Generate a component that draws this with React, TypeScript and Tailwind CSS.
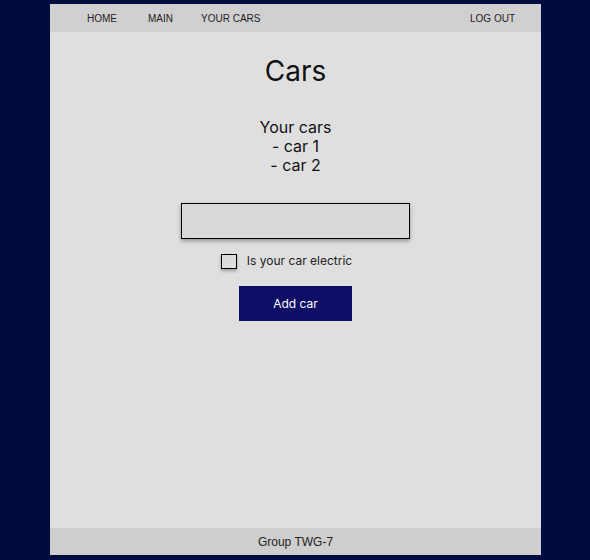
export default function App() {
    return (
        <div className="w-[590px] h-[560px] bg-[#000c40] pt-[4px] pl-[50px]">
            <div className="w-[491px] h-[551px] bg-[#dfdfdf] flex flex-col font-['Inter',sans-serif]">
                <nav className="h-[28px] bg-[#d0d0d0] flex items-center text-[10px] text-[#222] font-['Liberation_Sans',sans-serif]">
                    <a className="ml-[37px]">HOME</a>
                    <a className="ml-[31px]">MAIN</a>
                    <a className="ml-[28px]">YOUR CARS</a>
                    <a className="ml-auto mr-[26px]">LOG OUT</a>
                </nav>

                <main className="flex-1 flex flex-col items-center">
                    <h1 className="mt-[21px] text-[28px] leading-[36px] text-[#111]">Cars</h1>

                    <div className="mt-[29px] text-[16px] leading-[19px] text-[#111] text-center">
                        <p>Your cars</p>
                        <p>- car 1</p>
                        <p>- car 2</p>
                    </div>

                    <input
                        type="text"
                        className="mt-[28px] w-[229px] h-[36px] border border-black bg-[#d9d9d9] shadow-[0_2px_4px_rgba(0,0,0,0.35)] outline-none"
                    />

                    <label className="mt-[13px] mr-[18px] flex items-center gap-[10px] text-[12px] text-[#222]">
                        <span className="w-[16px] h-[15px] border border-black bg-[#dcdcdc] shadow-[0_2px_3px_rgba(0,0,0,0.3)]" />
                        Is your car electric
                    </label>

                    <button className="mt-[16px] w-[113px] h-[35px] bg-[#0e0e66] text-white text-[12px]">
                        Add car
                    </button>
                </main>

                <footer className="h-[27px] bg-[#cecece] flex items-center justify-center text-[12px] text-[#222] font-['Liberation_Sans',sans-serif]">
                    Group TWG-7
                </footer>
            </div>
        </div>
    )
}
